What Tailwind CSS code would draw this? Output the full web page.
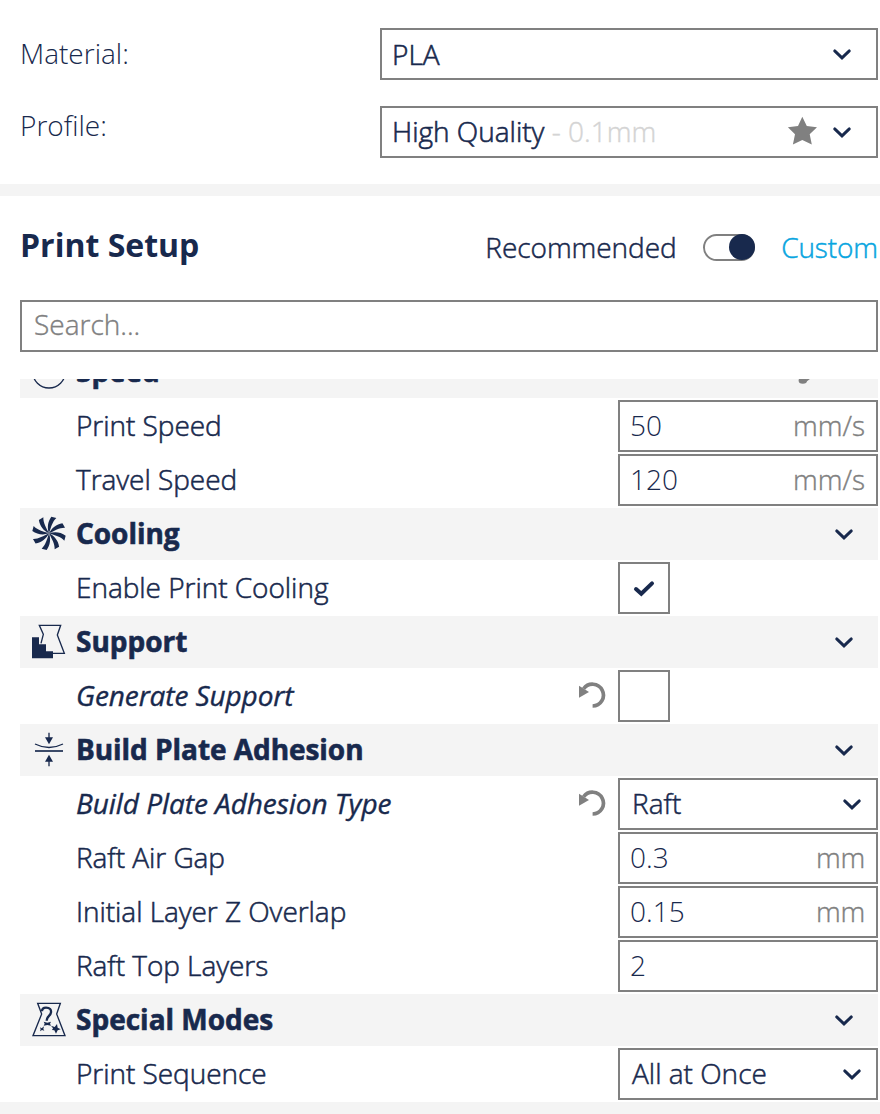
<!DOCTYPE html>
<html lang="en">
<head>
<meta charset="utf-8">
<title>Print Setup</title>
<script src="https://cdn.jsdelivr.net/npm/@tailwindcss/browser@4"></script>
</head>
<body class="bg-white">
<svg class="hidden">
  <symbol id="chev" viewBox="0 0 20 20"><path d="M2.7 6.9 10 13.9 17.3 6.9" fill="none" stroke="#18294d" stroke-width="2.9" stroke-linecap="round" stroke-linejoin="miter"/></symbol>
  <symbol id="reset" viewBox="0 0 28 28"><path d="M14.6 24 A10.9 10.9 0 1 0 5.6 6.8" fill="none" stroke="#808080" stroke-width="3.7"/><path d="M1 3.7 V15.7 L11 10Z" fill="#808080"/></symbol>
</svg>
<div class="flex h-[1114px] w-[880px] flex-col overflow-hidden bg-white font-['Open_Sans',sans-serif] text-[28px] leading-[38px] font-light text-[#18294d]">

  <section class="flex h-[184px] flex-col gap-[26px] pt-7 pr-0.5 pl-5">
    <div class="flex h-[52px] items-center">
      <span class="w-[360px] pb-0.5">Material:</span>
      <div class="flex h-[52px] flex-1 items-center border-2 border-[#808080] pr-6 pl-2.5">
        <span class="flex-1 [-webkit-text-stroke:0.6px]">PLA</span>
        <svg class="size-5"><use href="#chev"/></svg>
      </div>
    </div>
    <div class="flex h-[52px] items-center">
      <span class="w-[360px] pb-3.5">Profile:</span>
      <div class="flex h-[52px] flex-1 items-center border-2 border-[#808080] pr-6 pl-2.5">
        <span class="flex-1 pb-0.5 [-webkit-text-stroke:0.6px]">High Quality <span class="text-[#d4d4d4] [-webkit-text-stroke:0.4px]">- 0.1mm</span></span>
        <svg class="mr-[15px] mb-0.5 size-[30px]" viewBox="0 0 30 30"><path d="M15.3.8 19.8 9.9 30 11.2 22.7 18.3 24.8 28.6 15.3 24 5.9 28.6 8 18.3.9 11.2 11 9.9Z" fill="#808080"/></svg>
        <svg class="size-5"><use href="#chev"/></svg>
      </div>
    </div>
  </section>

  <div class="h-3 bg-[#f4f4f4]"></div>

  <section class="flex h-[104px] items-center pr-0.5 pl-5">
    <h2 class="flex-1 pb-[7px] text-[32px] leading-[44px] font-bold">Print Setup</h2>
    <div class="flex items-center gap-[26px] pb-0.5">
      <span class="tracking-[-0.05px] [-webkit-text-stroke:0.5px]">Recommended</span>
      <div class="flex h-[27px] w-[52.5px] items-center justify-end rounded-full border-2 border-[#808080]"><div class="-mr-0.5 size-[26px] shrink-0 rounded-full bg-[#18294d]"></div></div>
      <span class="text-[#08a5e0] tracking-[-0.1px] [-webkit-text-stroke:0.5px]">Custom</span>
    </div>
  </section>

  <div class="mr-0.5 ml-5 flex h-[52px] items-center border-2 border-[#808080] pb-1 pl-3 text-[#808080] [-webkit-text-stroke:0.4px]">Search...</div>

  <section class="mt-[27px] mr-0.5 ml-5 flex h-[721px] flex-col justify-end gap-0.5 overflow-hidden [&>*]:h-[52px] [&>*]:shrink-0">
    <div class="flex items-center bg-[#f4f4f4] pr-6 font-bold">
      <svg class="mr-[-4px] h-[52px] w-[60px]" viewBox="0 0 180 156"><circle cx="87" cy="77" r="49" fill="none" stroke="#18294d" stroke-width="4"/><path d="M87 77 112 52" stroke="#18294d" stroke-width="5"/></svg>
      <span class="flex-1 pb-0.5 tracking-[-0.03px] [-webkit-text-stroke:0.6px]">Speed</span>
      <svg class="mr-[24px] h-[52px] w-[12px]" viewBox="0 0 12 52"><path d="M7 25 4.5 34Q6 37 11.5 32" fill="none" stroke="#808080" stroke-width="2"/><ellipse cx="4.8" cy="34.6" rx="4.2" ry="3.2" fill="#808080"/></svg>
      <svg class="size-5"><use href="#chev" class="invisible"/></svg>
    </div>

    <div class="flex items-center pl-14">
      <span class="flex-1 pb-0.5 tracking-[-0.04px] [-webkit-text-stroke:0.55px]">Print Speed</span>
      <div class="flex h-[52px] w-[260px] items-center justify-between border-2 border-[#808080] pr-[11px] pb-0.5 pl-2.5"><span>50</span><span class="text-[#808080] [-webkit-text-stroke:0.4px]">mm/s</span></div>
    </div>
    <div class="flex items-center pl-14">
      <span class="flex-1 pb-0.5 tracking-[-0.04px] [-webkit-text-stroke:0.55px]">Travel Speed</span>
      <div class="flex h-[52px] w-[260px] items-center justify-between border-2 border-[#808080] pr-[11px] pb-0.5 pl-2.5"><span>120</span><span class="text-[#808080] [-webkit-text-stroke:0.4px]">mm/s</span></div>
    </div>

    <div class="flex items-center bg-[#f4f4f4] pr-6 font-bold">
      <svg class="mr-[-4px] h-[52px] w-[60px]" viewBox="0 0 180 156">
        <defs><path id="blade" d="M0 0C-6-17-4-35 7-50L22-46C10-35 6-18 0 0Z"/></defs>
        <g fill="#18294d" transform="translate(87 76)"><use href="#blade"/><use href="#blade" transform="rotate(45)"/><use href="#blade" transform="rotate(90)"/><use href="#blade" transform="rotate(135)"/><use href="#blade" transform="rotate(180)"/><use href="#blade" transform="rotate(225)"/><use href="#blade" transform="rotate(270)"/><use href="#blade" transform="rotate(315)"/></g>
      </svg>
      <span class="flex-1 pb-0.5 tracking-[-0.03px] [-webkit-text-stroke:0.6px]">Cooling</span>
      <svg class="size-5"><use href="#chev"/></svg>
    </div>
    <div class="flex items-center pl-14">
      <span class="flex-1 pb-0.5 tracking-[-0.04px] [-webkit-text-stroke:0.55px]">Enable Print Cooling</span>
      <div class="mr-[208px] size-[52px] border-2 border-[#808080]"><svg class="size-12" viewBox="0 0 48 48"><path d="M16 25 21.3 29.8 32 19.4" fill="none" stroke="#18294d" stroke-width="4" stroke-linecap="round"/></svg></div>
    </div>

    <div class="flex items-center bg-[#f4f4f4] pr-6 font-bold">
      <svg class="mr-[-4px] h-[52px] w-[60px]" viewBox="0 0 180 156"><path d="M63 82 70 55 58 28H122L112 57 133 112H95" fill="none" stroke="#18294d" stroke-width="4"/><path d="M36 64H57V85H78V106H99V127H36Z" fill="#18294d"/></svg>
      <span class="flex-1 pb-0.5 tracking-[-0.03px] [-webkit-text-stroke:0.6px]">Support</span>
      <svg class="size-5"><use href="#chev"/></svg>
    </div>
    <div class="flex items-center pl-14">
      <span class="flex-1 pb-0.5 font-normal tracking-[-0.1px] italic [-webkit-text-stroke:0.4px]">Generate Support</span>
      <svg class="mr-3 size-7"><use href="#reset"/></svg>
      <div class="mr-[208px] size-[52px] border-2 border-[#808080]"></div>
    </div>

    <div class="flex items-center bg-[#f4f4f4] pr-6 font-bold">
      <svg class="mr-[-4px] h-[52px] w-[60px]" viewBox="0 0 180 156"><g fill="none" stroke="#18294d" stroke-width="4"><path d="M87 26V42M87 110V127M45 60Q87 81 129 60"/><path d="M45 81H129" stroke-width="5"/></g><path d="M75 40H99L87 61ZM87 92 99 113H75Z" fill="#18294d"/></svg>
      <span class="flex-1 pb-0.5 tracking-[-0.05px] [-webkit-text-stroke:0.6px]">Build Plate Adhesion</span>
      <svg class="size-5"><use href="#chev"/></svg>
    </div>
    <div class="flex items-center pl-14">
      <span class="flex-1 pb-0.5 font-normal tracking-[-0.06px] italic [-webkit-text-stroke:0.4px]">Build Plate Adhesion Type</span>
      <svg class="mr-3 size-7"><use href="#reset"/></svg>
      <div class="flex h-[52px] w-[260px] items-center border-2 border-[#808080] pr-3.5 pl-3"><span class="flex-1 pb-0.5 [-webkit-text-stroke:0.5px]">Raft</span><svg class="size-5"><use href="#chev"/></svg></div>
    </div>
    <div class="flex items-center pl-14">
      <span class="flex-1 pb-0.5 tracking-[-0.05px] [-webkit-text-stroke:0.55px]">Raft Air Gap</span>
      <div class="flex h-[52px] w-[260px] items-center justify-between border-2 border-[#808080] pr-[11px] pb-0.5 pl-2.5"><span>0.3</span><span class="tracking-[-0.2px] text-[#808080] [-webkit-text-stroke:0.4px]">mm</span></div>
    </div>
    <div class="flex items-center pl-14">
      <span class="flex-1 pb-0.5 tracking-[-0.05px] [-webkit-text-stroke:0.55px]">Initial Layer Z Overlap</span>
      <div class="flex h-[52px] w-[260px] items-center justify-between border-2 border-[#808080] pr-[11px] pb-0.5 pl-2.5"><span>0.15</span><span class="tracking-[-0.2px] text-[#808080] [-webkit-text-stroke:0.4px]">mm</span></div>
    </div>
    <div class="flex items-center pl-14">
      <span class="flex-1 pb-0.5 tracking-[-0.05px] [-webkit-text-stroke:0.55px]">Raft Top Layers</span>
      <div class="flex h-[52px] w-[260px] items-center border-2 border-[#808080] px-2.5 pb-0.5"><span>2</span></div>
    </div>

    <div class="flex items-center bg-[#f4f4f4] pr-6 font-bold">
      <svg class="mr-[-4px] h-[52px] w-[60px]" viewBox="0 0 180 156"><path d="M53 28H121L110 60 135 125H39L65 60Z" fill="none" stroke="#18294d" stroke-width="4"/><path d="M66 52C66 42 72 41 78 41C90 41 94 47 93 55C92 66 80 66 80 80" fill="none" stroke="#18294d" stroke-width="7"/><path d="M71 83 82 86 93 83 90 89 93 95 82 93 71 95 74 89ZM60 100 65 103 72 97 70 105 73 110 66 108 60 112 62 106ZM93 95 104 99 111 90 113 101 122 106 113 109 108 119 103 109 96 108 99 103Z" fill="#18294d"/></svg>
      <span class="flex-1 pb-0.5 [-webkit-text-stroke:0.6px]">Special Modes</span>
      <svg class="size-5"><use href="#chev"/></svg>
    </div>
    <div class="flex items-center pl-14">
      <span class="flex-1 pb-0.5 tracking-[-0.04px] [-webkit-text-stroke:0.55px]">Print Sequence</span>
      <div class="flex h-[52px] w-[260px] items-center border-2 border-[#808080] pr-3.5 pl-3"><span class="flex-1 pb-0.5 [-webkit-text-stroke:0.5px]">All at Once</span><svg class="size-5"><use href="#chev"/></svg></div>
    </div>
  </section>

  <div class="mt-0.5 h-3 shrink-0 bg-[#f4f4f4]"></div>
</div>
</body>
</html>
